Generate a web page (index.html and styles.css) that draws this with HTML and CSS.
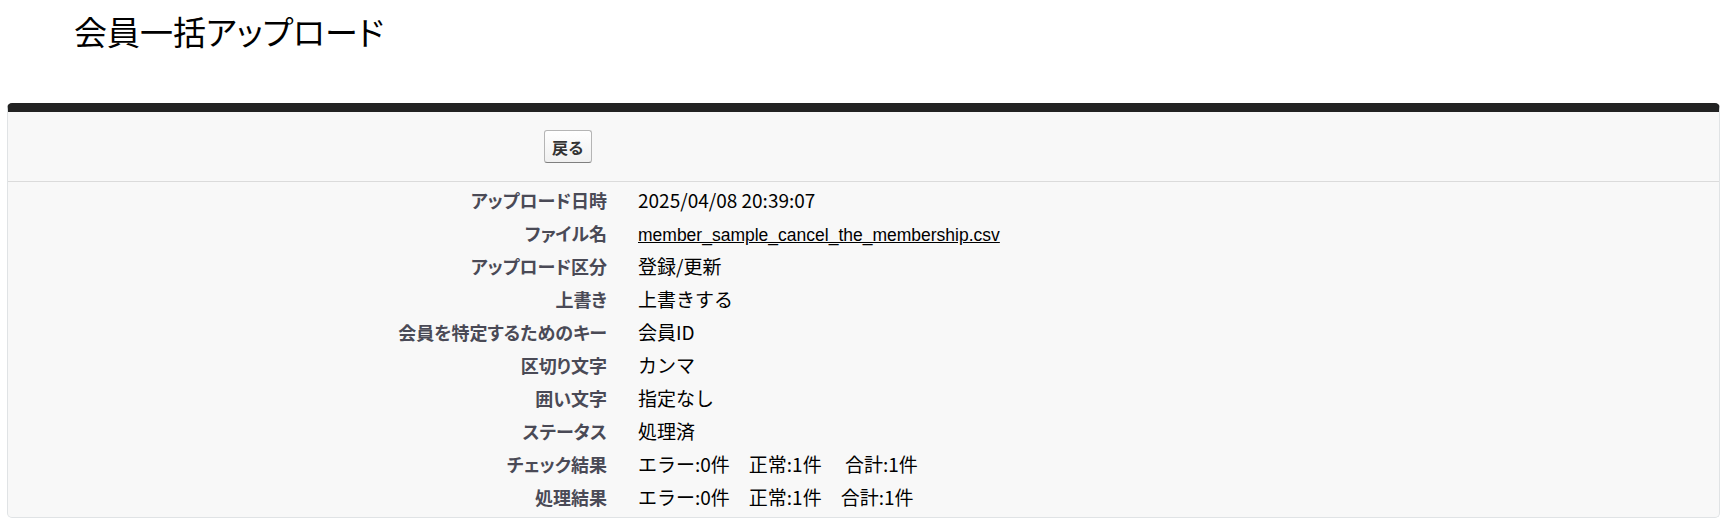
FILE: index.html
```html
<!DOCTYPE html>
<html lang="ja">
<head>
    <meta charset="UTF-8">
    <title>会員一括アップロード</title>
    <link rel="stylesheet" href="styles.css">
</head>
<body>
    <div class="page">
        <div class="pageHeader">
            <h1>会員一括アップロード</h1>
        </div>
        <div class="pageBlock">
            <div class="pbHeader">
                <div class="pbTitle"></div>
                <div class="pbButtons">
                    <button class="btn" type="button">戻る</button>
                </div>
            </div>
            <div class="pbBody">
                <div class="row">
                    <div class="labelCol">アップロード日時</div>
                    <div class="dataCol">2025/04/08 20:39:07</div>
                </div>
                <div class="row">
                    <div class="labelCol">ファイル名</div>
                    <div class="dataCol"><a href="#">member_sample_cancel_the_membership.csv</a></div>
                </div>
                <div class="row">
                    <div class="labelCol">アップロード区分</div>
                    <div class="dataCol">登録/更新</div>
                </div>
                <div class="row">
                    <div class="labelCol">上書き</div>
                    <div class="dataCol">上書きする</div>
                </div>
                <div class="row">
                    <div class="labelCol">会員を特定するためのキー</div>
                    <div class="dataCol">会員ID</div>
                </div>
                <div class="row">
                    <div class="labelCol">区切り文字</div>
                    <div class="dataCol">カンマ</div>
                </div>
                <div class="row">
                    <div class="labelCol">囲い文字</div>
                    <div class="dataCol">指定なし</div>
                </div>
                <div class="row">
                    <div class="labelCol">ステータス</div>
                    <div class="dataCol">処理済</div>
                </div>
                <div class="row">
                    <div class="labelCol">チェック結果</div>
                    <div class="dataCol">エラー:0件　正常:1件　 合計:1件</div>
                </div>
                <div class="row">
                    <div class="labelCol">処理結果</div>
                    <div class="dataCol">エラー:0件　正常:1件　合計:1件</div>
                </div>
            </div>
        </div>
    </div>
</body>
</html>
```

FILE: styles.css
```css
body,div,h1{
    padding:0;
    margin:0;
}
body{
    font-family:"Noto Sans CJK JP","Liberation Sans",sans-serif;
    background-color:#fff;
    color:#000;
}
.page{
    padding:0 14px 0 7px;
}
.pageHeader{
    padding:13px 0 0 67px;
    height:90px;
}
.pageHeader h1{
    font-size:33px;
    line-height:36px;
    font-weight:400;
    font-feature-settings:"palt";
}
.pageBlock{
    background-color:#f8f8f8;
    border:1px solid #e0e3e5;
    border-top:9px solid #222;
    border-radius:5px;
}
.pbHeader{
    display:flex;
    align-items:center;
    height:69px;
    border-bottom:1px solid #dbdbdb;
}
.pbTitle{
    width:536px;
}
.btn{
    font-family:inherit;
    font-size:16px;
    font-weight:700;
    color:#333;
    height:33px;
    padding:0 7px;
    border:1px solid #b5b5b5;
    border-bottom-color:#7f7f7f;
    border-radius:3px;
    background:linear-gradient(#fff,#f0f0f0);
    cursor:pointer;
}
.pbBody{
    padding:1px 0 4px;
}
.row{
    display:grid;
    grid-template-columns:599px 1fr;
    column-gap:31px;
    align-items:center;
    height:33px;
}
.labelCol{
    text-align:right;
    font-size:18px;
    font-weight:700;
    color:#4a4a56;
    font-feature-settings:"palt";
}
.dataCol{
    font-size:19px;
    white-space:pre;
}
.dataCol a{
    font-family:"Liberation Sans","Noto Sans CJK JP",sans-serif;
    font-size:17.5px;
    color:#000;
    text-decoration:underline;
}
```
